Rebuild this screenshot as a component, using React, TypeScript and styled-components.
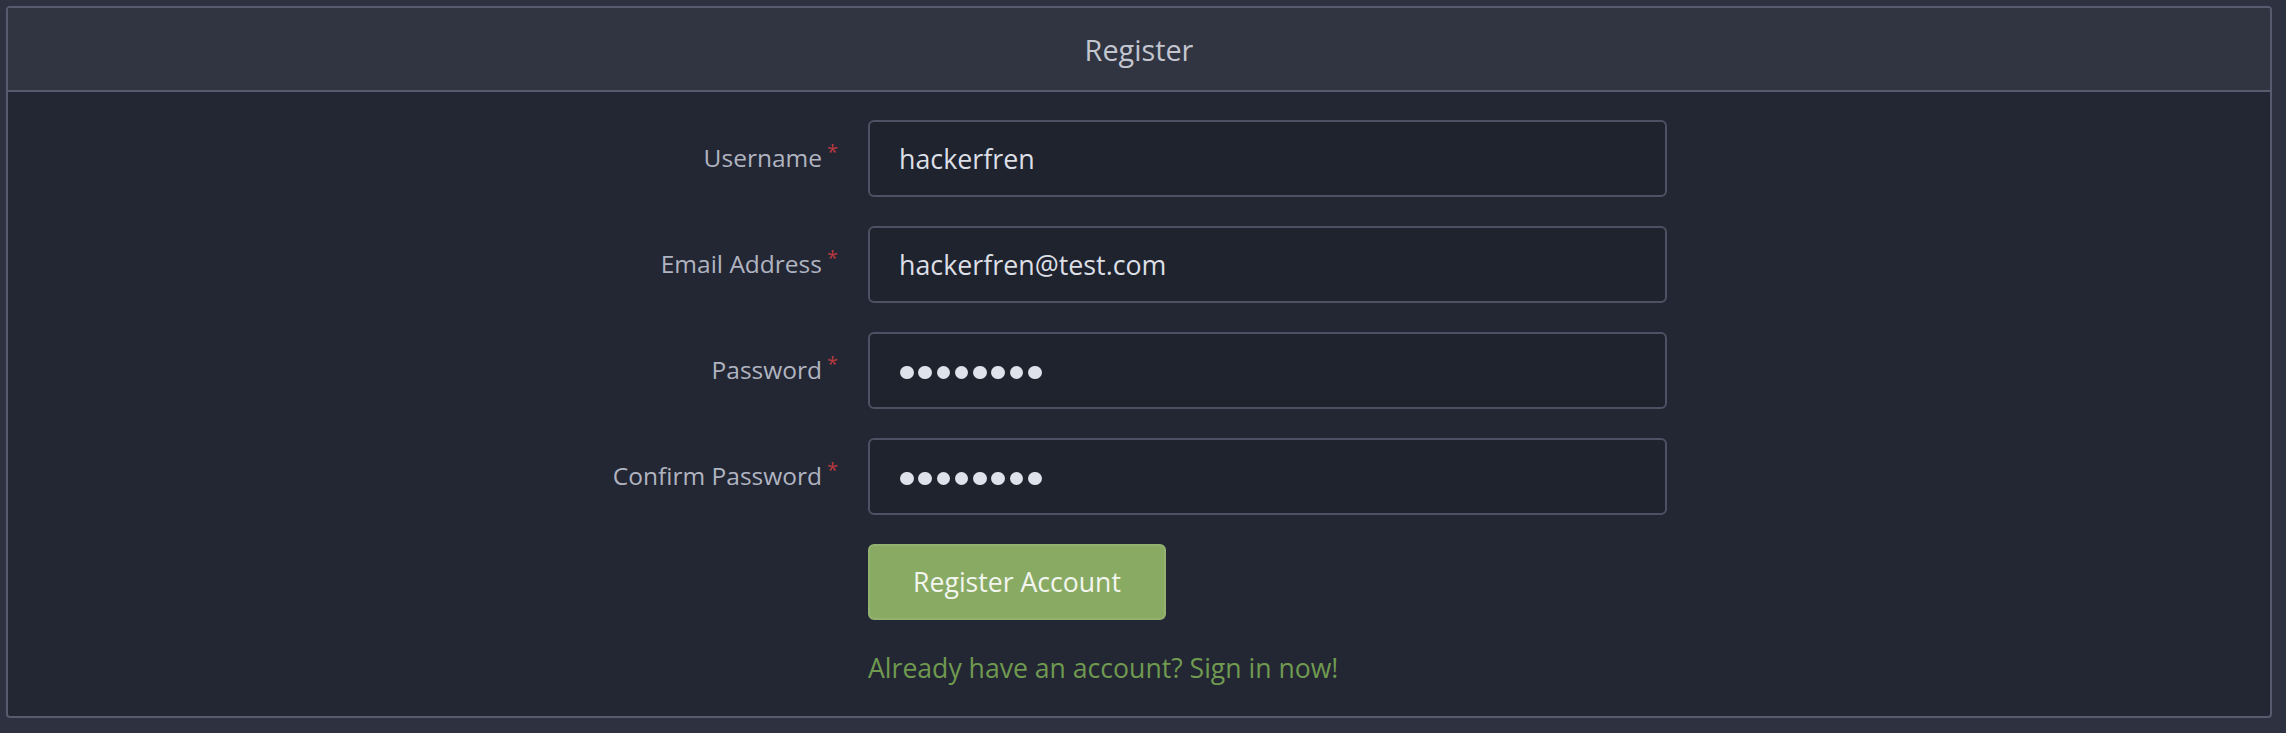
import React from "react";
import styled, { createGlobalStyle } from "styled-components";

const GlobalStyle = createGlobalStyle`
  html, body {
    margin: 0;
    padding: 0;
    background: #2e3140;
  }
  body {
    font-family: "Open Sans", "Noto Sans", sans-serif;
    color: #c6c9d2;
  }
  * { box-sizing: border-box; }
`;

const Page = styled.div`
  padding: 6px 14px 15px 6px;
`;

const Card = styled.section`
  border: 2px solid #575b6e;
  border-radius: 4px;
  overflow: hidden;
  background: #232633;
`;

const CardHeader = styled.header`
  height: 84px;
  display: flex;
  align-items: center;
  justify-content: center;
  background: #313441;
  border-bottom: 2px solid #575b6e;
  font-size: 28.8px;
  color: #c3c6cf;
`;

const Form = styled.form`
  display: grid;
  grid-template-columns: 830px 799px;
  column-gap: 30px;
  row-gap: 29px;
  padding: 28px 0 28px 0;
`;

const Label = styled.label`
  grid-column: 1;
  display: flex;
  align-items: center;
  justify-content: flex-end;
  font-size: 24.5px;
  color: #b0b4c0;
  padding-bottom: 3px;
`;

const Required = styled.span`
  color: #b8393f;
  font-size: 20px;
  align-self: flex-start;
  margin-top: 18px;
  margin-left: 5px;
`;

const fieldBox = `
  grid-column: 2;
  height: 77px;
  width: 100%;
  background: #1f232e;
  border: 2px solid #4d5163;
  border-radius: 6px;
  padding: 0 29px;
`;

const Input = styled.input`
  ${fieldBox}
  color: #dcdfe6;
  font-family: "Open Sans", sans-serif;
  font-size: 26.8px;
  outline: none;
`;

const MaskedField = styled.div`
  ${fieldBox}
  display: flex;
  align-items: center;
  gap: 4.8px;
  padding-left: 30px;
  padding-top: 4px;
`;

const Dot = styled.span`
  width: 13.5px;
  height: 13.5px;
  border-radius: 50%;
  background: #dfe2ea;
`;

const Actions = styled.div`
  grid-column: 2;
  display: flex;
  flex-direction: column;
  align-items: flex-start;
  gap: 28px;
`;

const Button = styled.button`
  height: 76px;
  width: 298px;
  background: #88aa63;
  border: 2px solid #93b26f;
  border-radius: 6px;
  color: #f3f5ef;
  font-family: "Open Sans", sans-serif;
  font-size: 26.6px;
  padding: 0;
  cursor: pointer;
`;

const SignInLink = styled.a`
  font-size: 26.6px;
  line-height: 40px;
  color: #6f9a50;
  text-decoration: none;
`;

type Field = { id: string; label: string; value: string; masked?: boolean };

const fields: Field[] = [
  { id: "username", label: "Username", value: "hackerfren" },
  { id: "email", label: "Email Address", value: "hackerfren@test.com" },
  { id: "password", label: "Password", value: "password", masked: true },
  { id: "confirm", label: "Confirm Password", value: "password", masked: true },
];

export default function App() {
  return (
    <>
      <GlobalStyle />
      <Page>
        <Card>
          <CardHeader>Register</CardHeader>
          <Form onSubmit={(e) => e.preventDefault()}>
            {fields.map((f) => (
              <React.Fragment key={f.id}>
                <Label htmlFor={f.id}>
                  {f.label}
                  <Required>*</Required>
                </Label>
                {f.masked ? (
                  <MaskedField id={f.id} role="textbox" aria-label={f.label}>
                    {Array.from(f.value).map((_, i) => (
                      <Dot key={i} />
                    ))}
                  </MaskedField>
                ) : (
                  <Input id={f.id} type="text" defaultValue={f.value} />
                )}
              </React.Fragment>
            ))}
            <Actions>
              <Button type="submit">Register Account</Button>
              <SignInLink href="#">Already have an account? Sign in now!</SignInLink>
            </Actions>
          </Form>
        </Card>
      </Page>
    </>
  );
}
